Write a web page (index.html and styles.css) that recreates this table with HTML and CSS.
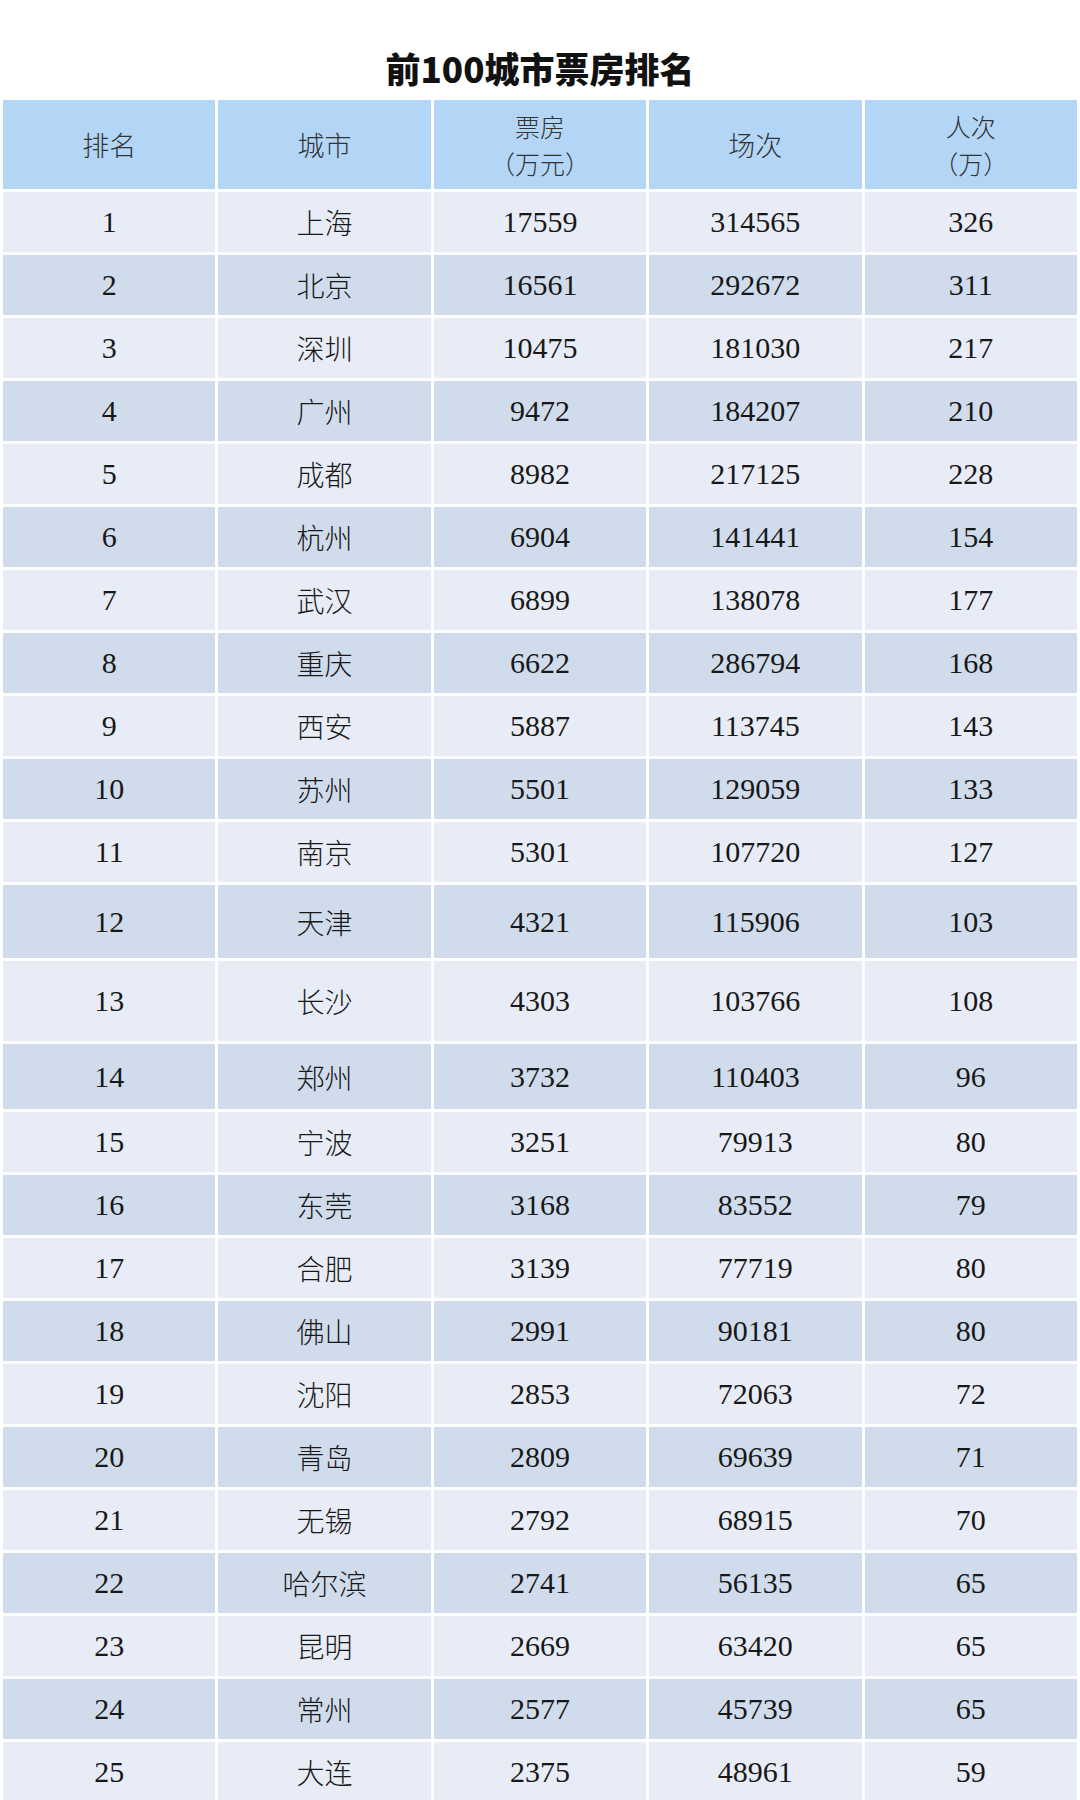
FILE: index.html
```html
<!DOCTYPE html>
<html lang="zh-CN">
<head>
<meta charset="utf-8">
<title>前100城市票房排名</title>
<link rel="stylesheet" href="styles.css">
</head>
<body>
<h1 class="title">前100城市票房排名</h1>
<table class="rank">
<thead>
<tr><th>排名</th><th>城市</th><th><span class="ln">票房</span><span class="ln">（万元）</span></th><th>场次</th><th><span class="ln">人次</span><span class="ln">（万）</span></th></tr>
</thead>
<tbody>
<tr><td>1</td><td class="cn">上海</td><td>17559</td><td>314565</td><td>326</td></tr>
<tr><td>2</td><td class="cn">北京</td><td>16561</td><td>292672</td><td>311</td></tr>
<tr><td>3</td><td class="cn">深圳</td><td>10475</td><td>181030</td><td>217</td></tr>
<tr><td>4</td><td class="cn">广州</td><td>9472</td><td>184207</td><td>210</td></tr>
<tr><td>5</td><td class="cn">成都</td><td>8982</td><td>217125</td><td>228</td></tr>
<tr><td>6</td><td class="cn">杭州</td><td>6904</td><td>141441</td><td>154</td></tr>
<tr><td>7</td><td class="cn">武汉</td><td>6899</td><td>138078</td><td>177</td></tr>
<tr><td>8</td><td class="cn">重庆</td><td>6622</td><td>286794</td><td>168</td></tr>
<tr><td>9</td><td class="cn">西安</td><td>5887</td><td>113745</td><td>143</td></tr>
<tr><td>10</td><td class="cn">苏州</td><td>5501</td><td>129059</td><td>133</td></tr>
<tr><td>11</td><td class="cn">南京</td><td>5301</td><td>107720</td><td>127</td></tr>
<tr class="r12"><td>12</td><td class="cn">天津</td><td>4321</td><td>115906</td><td>103</td></tr>
<tr class="r13"><td>13</td><td class="cn">长沙</td><td>4303</td><td>103766</td><td>108</td></tr>
<tr class="r14"><td>14</td><td class="cn">郑州</td><td>3732</td><td>110403</td><td>96</td></tr>
<tr><td>15</td><td class="cn">宁波</td><td>3251</td><td>79913</td><td>80</td></tr>
<tr><td>16</td><td class="cn">东莞</td><td>3168</td><td>83552</td><td>79</td></tr>
<tr><td>17</td><td class="cn">合肥</td><td>3139</td><td>77719</td><td>80</td></tr>
<tr><td>18</td><td class="cn">佛山</td><td>2991</td><td>90181</td><td>80</td></tr>
<tr><td>19</td><td class="cn">沈阳</td><td>2853</td><td>72063</td><td>72</td></tr>
<tr><td>20</td><td class="cn">青岛</td><td>2809</td><td>69639</td><td>71</td></tr>
<tr><td>21</td><td class="cn">无锡</td><td>2792</td><td>68915</td><td>70</td></tr>
<tr><td>22</td><td class="cn">哈尔滨</td><td>2741</td><td>56135</td><td>65</td></tr>
<tr><td>23</td><td class="cn">昆明</td><td>2669</td><td>63420</td><td>65</td></tr>
<tr><td>24</td><td class="cn">常州</td><td>2577</td><td>45739</td><td>65</td></tr>
<tr><td>25</td><td class="cn">大连</td><td>2375</td><td>48961</td><td>59</td></tr>
</tbody>
</table>
</body>
</html>
```

FILE: styles.css
```css
html, body {
  margin: 0;
  padding: 0;
  background: #ffffff;
}

body {
  width: 1080px;
  font-family: "Liberation Serif", "Noto Sans CJK SC", serif;
  color: #181818;
}

.title {
  margin: 0 0 5px 0;
  padding-top: 44px;
  height: 48px;
  line-height: 48px;
  text-align: center;
  font-family: "Noto Sans CJK SC", "Noto Sans", sans-serif;
  font-weight: 900;
  font-size: 35px;
  color: #111111;
}

.rank {
  width: 1080px;
  border-collapse: separate;
  border-spacing: 3px;
  margin: 0;
  table-layout: fixed;
}

.rank th,
.rank td {
  padding: 0;
  text-align: center;
  vertical-align: middle;
  font-weight: 400;
}

.rank th {
  height: 89px;
  background: #b3d6f7;
  font-family: "Noto Sans CJK SC", sans-serif;
  font-weight: 300;
  font-size: 27px;
  line-height: 40px;
  color: #333333;
}

.rank th .ln {
  display: block;
  font-size: 25px;
  line-height: 37px;
}

.rank td {
  height: 60px;
  font-size: 30px;
  line-height: 34px;
}

.rank td.cn {
  font-family: "Noto Sans CJK SC", sans-serif;
  font-weight: 300;
  font-size: 28px;
  line-height: 42px;
}

.rank tbody tr:nth-child(odd) td {
  background: #e8ecf6;
}

.rank tbody tr:nth-child(even) td {
  background: #d0dcec;
}

.rank tr.r12 td { height: 73px; }
.rank tr.r13 td { height: 80px; }
.rank tr.r14 td { height: 65px; }
```
